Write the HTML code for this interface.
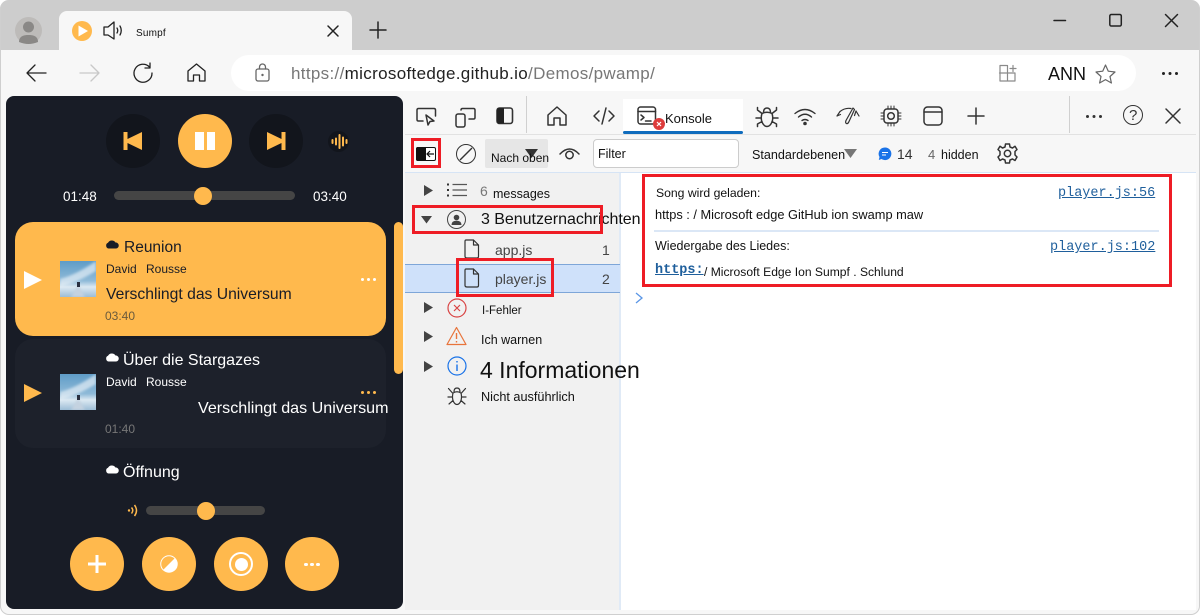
<!DOCTYPE html>
<html><head><meta charset="utf-8"><style>
html,body{margin:0;padding:0;width:1200px;height:615px;overflow:hidden;background:#fff}
body{position:relative;font-family:"Liberation Sans",sans-serif;color:#111}
.a{position:absolute}
.t{position:absolute;white-space:nowrap;line-height:1}
.m{font-family:"Liberation Mono",monospace;color:#1f5f9c;text-decoration:underline}
svg{position:absolute;overflow:visible}
.s{fill:none;stroke:#333;stroke-width:1.5;stroke-linecap:round;stroke-linejoin:round}
.c{position:absolute;border-radius:50%}
.red{position:absolute;border:3px solid #ee1c25;box-sizing:border-box}
</style></head><body>
<!-- chrome -->
<div class="a" style="left:0;top:0;width:1200px;height:615px;background:#f7f7f7;border-radius:9px"></div>
<div class="a" style="left:0;top:0;width:1200px;height:50px;background:#cdcdcd;border-radius:9px 9px 0 0"></div>
<div class="a" style="left:59px;top:11px;width:293px;height:39px;background:#f7f7f7;border-radius:8px 8px 0 0"></div>
<!-- profile -->
<div class="c" style="left:15px;top:17px;width:27px;height:27px;background:#bdbbb9"></div>
<svg style="left:15px;top:17px" width="27" height="27"><circle cx="13.500" cy="10" r="5.500" fill="#8a8886"/><path d="M4 25 C4 19 9 18 13.500 18 S23 19 23 25 Q18 27 13.500 27 T4 25Z" fill="#8a8886"/></svg>
<!-- tab -->
<div class="c" style="left:72px;top:21px;width:20px;height:20px;background:#ffb94d"></div>
<svg style="left:72px;top:21px" width="20" height="20"><path d="M6.500 4.500 L16 10 L6.500 15.500Z" fill="#fff"/></svg>
<svg style="left:103px;top:20px" width="22" height="22"><path class="s" style="stroke:#222;stroke-width:1.300" d="M1 7H5L11 2V19L5 15H1Z"/><path class="s" style="stroke:#222;stroke-width:1.300" d="M14 8Q15.500 10.500 14 13M17 6Q19.500 10.500 17 15"/></svg>
<div class="t" style="left:136px;top:29px;font-size:10px;letter-spacing:.2px">Sumpf</div>
<svg style="left:327px;top:25px" width="12" height="12"><path class="s" style="stroke:#222" d="M1 1L11 11M11 1L1 11"/></svg>
<svg style="left:369px;top:21px" width="18" height="18"><path class="s" style="stroke:#222" d="M9 1V17M1 9H17"/></svg>
<!-- window controls -->
<svg style="left:1053px;top:14px" width="14" height="14"><path class="s" style="stroke:#222" d="M1 6.500H12.500"/></svg>
<svg style="left:1109px;top:14px" width="14" height="14"><rect x=".8" y=".5" width="11.500" height="11.500" rx="1.500" class="s" style="stroke:#222"/></svg>
<svg style="left:1165px;top:14px" width="14" height="14"><path class="s" style="stroke:#222" d="M.5 .5L12.500 12.500M12.500 .5L.5 12.500"/></svg>
<!-- nav -->
<svg style="left:25px;top:63px" width="22" height="20"><path class="s" style="stroke:#222;stroke-width:1.300" d="M2 10H21M10 2L2 10L10 18"/></svg>
<svg style="left:79px;top:63px" width="22" height="20"><path class="s" style="stroke:#c8c8c8;stroke-width:1.300" d="M1 10H20M12 2L20 10L12 18"/></svg>
<svg style="left:132px;top:62px" width="22" height="22"><path class="s" style="stroke:#222;stroke-width:1.300" d="M17.500 5A9 9 0 1 0 20 11M18 1V6H13"/></svg>
<svg style="left:187px;top:63px" width="20" height="20"><path class="s" style="stroke:#222;stroke-width:1.300" d="M1 8L9.500 1L18 8V18H12.500V12H6.500V18H1Z"/></svg>
<div class="a" style="left:231px;top:55px;width:905px;height:36px;background:#fff;border-radius:18px"></div>
<svg style="left:255px;top:63px" width="16" height="19"><rect x="1" y="6" width="13" height="12" rx="2" class="s" style="stroke:#666;stroke-width:1.300"/><path class="s" style="stroke:#666;stroke-width:1.300" d="M4.500 6V4A3 3 0 0 1 10.500 4V6"/><circle cx="7.500" cy="12" r="1.200" fill="#666"/></svg>
<div class="t" style="left:291px;top:65px;font-size:17px;color:#777;letter-spacing:.33px">https://<span style="color:#222">microsoftedge.github.io</span>/Demos/pwamp/</div>
<svg style="left:998px;top:64px" width="20" height="18"><path class="s" style="stroke:#8a8a8a;stroke-width:1.200" d="M8.500 1.500H2V17H17V9H1.500M9.500 1.500V17M12 4.500H18M15 1.500V7.500"/></svg>
<div class="t" style="left:1048px;top:65px;font-size:18px">ANN</div>
<svg style="left:1095px;top:64px" width="21" height="20"><path class="s" style="stroke:#666;stroke-width:1.200" d="M10.500 1L13.300 7.200L20 8L15 12.500L16.400 19L10.500 15.600L4.600 19L6 12.500L1 8L7.700 7.200Z"/></svg>
<div class="a" style="left:1162px;top:72px;width:3px;height:3px;border-radius:50%;background:#222;box-shadow:6.500px 0 #222,13px 0 #222"></div>
<!-- devtools area -->
<div class="a" style="left:405px;top:96px;width:791px;height:514px;background:#fff"></div>
<div class="a" style="left:405px;top:96px;width:791px;height:38px;background:#f7f7f7;border-bottom:1px solid #e2e2e2"></div>
<div class="a" style="left:405px;top:135px;width:791px;height:37px;background:#f7f7f7;border-bottom:1px solid #d6e4f5"></div>
<div class="a" style="left:405px;top:173px;width:214px;height:437px;background:#f1f1f1;border-right:2px solid #e0eaf6"></div>
<div class="a" style="left:526px;top:96px;width:1px;height:37px;background:#d0d0d0"></div>
<div class="a" style="left:1069px;top:96px;width:1px;height:37px;background:#d0d0d0"></div>
<!-- devtools tabs -->
<svg style="left:416px;top:107px" width="22" height="20"><path class="s" d="M7 14H2.500Q1 14 1 12.500V3Q1 1.500 2.500 1.500H18Q19.500 1.500 19.500 3V9"/><path class="s" d="M10 8L12 18L14 14.500L18 14Z"/></svg>
<svg style="left:455px;top:107px" width="22" height="21"><rect x="1" y="7" width="9" height="13" rx="2" class="s"/><path class="s" d="M6 3V3Q6 1.500 7.500 1.500H18.500Q20 1.500 20 3V10.500Q20 12 18.500 12H14"/></svg>
<svg style="left:496px;top:107px" width="18" height="18"><rect x="1" y="1" width="15.500" height="15.500" rx="2.500" class="s" style="stroke-width:1.600"/><path d="M3.500 1H8V16.500H3.500Q1 16.500 1 14V3.500Q1 1 3.500 1Z" fill="#222"/></svg>
<svg style="left:546px;top:105px" width="22" height="22"><path class="s" d="M2 10L11 2L20 10V20H14V13H8V20H2Z"/></svg>
<svg style="left:593px;top:107px" width="22" height="18"><path class="s" d="M6 4L1 9L6 14M16 4L21 9L16 14M13 1L9 17"/></svg>
<div class="a" style="left:623px;top:99px;width:120px;height:35px;background:#fff"></div>
<div class="a" style="left:623px;top:131px;width:120px;height:3px;background:#0f6cbd;border-radius:2px"></div>
<svg style="left:637px;top:106px" width="20" height="20"><rect x="1" y="1" width="17.500" height="17" rx="2.500" class="s"/><path class="s" d="M1 5.500H18.500M4 9L7 11.500L4 14M8.500 15H14"/></svg>
<div class="c" style="left:653px;top:118px;width:12px;height:12px;background:#dd3c3c"></div>
<svg style="left:653px;top:118px" width="12" height="12"><path d="M4 4L8 8M8 4L4 8" stroke="#fff" stroke-width="1.200"/></svg>
<div class="t" style="left:665px;top:112px;font-size:13px">Konsole</div>
<svg style="left:755px;top:105px" width="24" height="23"><path class="s" d="M7 8.500Q12 6 17 8.500Q18.500 13 17 17Q15 21.500 12 21.500Q9 21.500 7 17Q5.500 13 7 8.500ZM8.500 7.500Q8.500 3 12 3Q15.500 3 15.500 7.500M2.500 2.500V5L7 8.500M21.500 2.500V5L17 8.500M1 13H6M23 13H18M2.500 21.500V19L7 16.500M21.500 21.500V19L17 16.500"/></svg>
<svg style="left:794px;top:107px" width="22" height="20"><path class="s" style="stroke-width:1.400" d="M1 6.500Q11 -1.500 21 6.500M4.500 10Q11 4.500 17.500 10M8 13.500Q11 11.500 14 13.500"/><circle cx="11" cy="16.500" r="1.800" fill="#333"/></svg>
<svg style="left:836px;top:106px" width="24" height="20"><path class="s" style="stroke-width:1.200" d="M1 10L4 5.500Q9 1.500 15 2.500M1 10L4.500 8.500M20 5L23 10M20 5L18.500 9.500M17 2L10 14.500Q9 17 10.500 17.500Q12 18 13 15.500L18.500 3.500Z"/></svg>
<svg style="left:880px;top:105px" width="22" height="22"><rect x="4" y="4" width="14" height="14" rx="3" class="s"/><circle cx="11" cy="11" r="3.300" class="s"/><path class="s" style="stroke-width:1" d="M8 1V3.500M11 1V3.500M14 1V3.500M8 18.500V21M11 18.500V21M14 18.500V21M1 8H3.500M1 11H3.500M1 14H3.500M18.500 8H21M18.500 11H21M18.500 14H21"/></svg>
<svg style="left:923px;top:106px" width="20" height="20"><rect x="1" y="1" width="18" height="18" rx="3.500" class="s"/><path class="s" d="M1 6H19"/></svg>
<svg style="left:967px;top:107px" width="18" height="18"><path class="s" d="M9 1V17M1 9H17"/></svg>
<div class="a" style="left:1086px;top:115px;width:3px;height:3px;border-radius:50%;background:#333;box-shadow:6.500px 0 #333,13px 0 #333"></div>
<div class="c" style="left:1123px;top:105px;width:20px;height:20px;border:1.300px solid #333;box-sizing:border-box"></div>
<div class="t" style="left:1129px;top:108px;font-size:15px;color:#333">?</div>
<svg style="left:1165px;top:108px" width="16" height="16"><path class="s" d="M1 1L15 15M15 1L1 15"/></svg>
<!-- console toolbar -->
<div class="a" style="left:416px;top:147px;width:20px;height:14px;border-radius:2px;border:1.500px solid #111;box-sizing:border-box;background:#fff"></div>
<div class="a" style="left:416px;top:147px;width:10px;height:14px;background:#111;border-radius:2px 0 0 2px"></div>
<svg style="left:425px;top:149px" width="10" height="10"><path d="M9 5H2M5 2L2 5L5 8" fill="none" stroke="#111" stroke-width="1.200"/></svg>
<div class="c" style="left:456px;top:144px;width:20px;height:20px;border:1.400px solid #333;box-sizing:border-box"></div>
<svg style="left:456px;top:144px" width="20" height="20"><path d="M4 16L16 4" stroke="#333" stroke-width="1.400"/></svg>
<div class="a" style="left:485px;top:139px;width:63px;height:29px;background:#e6e6e6;border-radius:2px"></div>
<svg style="left:525px;top:149px" width="14" height="10"><path d="M0 0H13L6.500 9Z" fill="#333"/></svg>
<div class="t" style="left:491px;top:152px;font-size:12px">Nach oben</div>
<svg style="left:559px;top:147px" width="21" height="14"><path class="s" d="M1 7Q10.500 -3 20 7"/><circle cx="10.500" cy="8" r="3.700" class="s"/></svg>
<div class="a" style="left:593px;top:139px;width:146px;height:29px;background:#fff;border:1px solid #ccc;border-radius:4px;box-sizing:border-box"></div>
<div class="t" style="left:598px;top:148px;font-size:12.500px">Filter</div>
<div class="t" style="left:752px;top:149px;font-size:12.600px">Standardebenen</div>
<svg style="left:844px;top:149px" width="13" height="9"><path d="M0 0H13L6.500 9Z" fill="#777"/></svg>
<svg style="left:878px;top:147px" width="14" height="14"><path d="M7 .5A6.300 6.300 0 1 1 3.500 12L.8 13L1.500 10A6.300 6.300 0 0 1 7 .5Z" fill="#1a73e8"/><path d="M4 5.500H10M4 8H8" stroke="#fff" stroke-width="1"/></svg>
<div class="t" style="left:897px;top:147px;font-size:14px;color:#333">14</div>
<div class="t" style="left:928px;top:148px;font-size:13px;color:#666">4</div>
<div class="t" style="left:941px;top:149px;font-size:12.500px">hidden</div>
<svg style="left:997px;top:143px" width="21" height="21"><path class="s" d="M8.500 1H12.500L13 4L15.500 5L18 3.300L20 6.500L18 8.500V12L20 14L18 17.500L15.500 16L13 17L12.500 20H8.500L8 17L5.500 16L3 17.500L1 14L3 12V8.500L1 6.500L3 3.300L5.500 5L8 4Z"/><circle cx="10.500" cy="10.500" r="3.200" class="s"/></svg>
<!-- sidebar -->
<svg style="left:424px;top:185px" width="9" height="11"><path d="M0 0L9 5.500L0 11Z" fill="#444"/></svg>
<svg style="left:446px;top:183px" width="22" height="14"><path d="M6.500 1.500H21M6.500 7H21M6.500 12.500H21" stroke="#555" stroke-width="1.300"/><path d="M1 1.500H3M1 7H3M1 12.500H3" stroke="#333" stroke-width="2"/></svg>
<div class="t" style="left:480px;top:184px;font-size:14px;color:#777">6</div>
<div class="t" style="left:493px;top:188px;font-size:12.500px">messages</div>
<svg style="left:421px;top:216px" width="12" height="8"><path d="M0 0H11L5.500 7.500Z" fill="#444"/></svg>
<div class="c" style="left:447px;top:210px;width:19px;height:19px;border:1.300px solid #444;box-sizing:border-box"></div>
<svg style="left:447px;top:210px" width="19" height="19"><circle cx="9.500" cy="7.500" r="2.800" fill="#444"/><path d="M4.500 15Q4.500 10.800 9.500 10.800Q14.500 10.800 14.500 15Z" fill="#444"/></svg>
<div class="t" style="left:481px;top:212px;font-size:16px;letter-spacing:-.03px">3 Benutzernachrichten</div>
<svg style="left:464px;top:239px" width="16" height="20"><path class="s" style="stroke-width:1.200" d="M2 1H9.500L14.500 6V17.500Q14.500 19 13 19H3Q1 19 1 17.500V2.500Q1 1 2 1ZM9.500 1V6H14.500"/></svg>
<div class="t" style="left:495px;top:243px;font-size:14px;color:#444">app.js</div>
<div class="t" style="left:602px;top:243px;font-size:14px;color:#444">1</div>
<div class="a" style="left:405px;top:264px;width:215px;height:29px;background:#cfe1fa;border-top:1px solid #7ea6d8;border-bottom:1px solid #7ea6d8;box-sizing:border-box"></div>
<svg style="left:464px;top:268px" width="16" height="20"><path class="s" style="stroke-width:1.200" d="M2 1H9.500L14.500 6V17.500Q14.500 19 13 19H3Q1 19 1 17.500V2.500Q1 1 2 1ZM9.500 1V6H14.500"/></svg>
<div class="t" style="left:495px;top:272px;font-size:14px;color:#444">player.js</div>
<div class="t" style="left:602px;top:272px;font-size:14px;color:#444">2</div>
<svg style="left:424px;top:302px" width="9" height="11"><path d="M0 0L9 5.500L0 11Z" fill="#444"/></svg>
<svg style="left:447px;top:298px" width="20" height="20"><circle cx="10" cy="10" r="9" fill="none" stroke="#d94545" stroke-width="1.200"/><path d="M7 7L13 13M13 7L7 13" stroke="#d94545" stroke-width="1.200"/></svg>
<div class="t" style="left:482px;top:306px;font-size:11.500px">I-Fehler</div>
<svg style="left:424px;top:331px" width="9" height="11"><path d="M0 0L9 5.500L0 11Z" fill="#444"/></svg>
<svg style="left:446px;top:326px" width="21" height="20"><path d="M10.500 1.500L20 18.500H1Z" fill="none" stroke="#e8743b" stroke-width="1.200" stroke-linejoin="round"/><path d="M10.500 7V13M10.500 15V16.500" stroke="#e8743b" stroke-width="1.400"/></svg>
<div class="t" style="left:481px;top:334px;font-size:12.500px">Ich warnen</div>
<svg style="left:424px;top:361px" width="9" height="11"><path d="M0 0L9 5.500L0 11Z" fill="#444"/></svg>
<svg style="left:447px;top:356px" width="20" height="20"><circle cx="10" cy="10" r="9" fill="none" stroke="#1a73e8" stroke-width="1.200"/><path d="M10 8.500V15M10 5V6.500" stroke="#1a73e8" stroke-width="1.400"/></svg>
<div class="t" style="left:480px;top:359px;font-size:23px">4 Informationen</div>
<svg style="left:447px;top:386px" width="20" height="20"><path class="s" style="stroke-width:1.200" d="M6 7Q10 4.500 14 7Q15 11 14 14.500Q12.500 18.500 10 18.500Q7.500 18.500 6 14.500Q5 11 6 7ZM7 6Q7 2 10 2Q13 2 13 6M1.500 2.500L5.500 7M18.500 2.500L14.500 7M1 11H5M19 11H15M2 18L6 14.500M18 18L14 14.500"/></svg>
<div class="t" style="left:481px;top:391px;font-size:12.700px">Nicht ausführlich</div>
<!-- console -->
<div class="t" style="left:656px;top:187px;font-size:12.200px">Song wird geladen:</div>
<div class="t m" style="left:1058px;top:187px;font-size:13.500px">player.js:56</div>
<div class="t" style="left:655px;top:209px;font-size:12.800px">https : / Microsoft edge GitHub ion swamp maw</div>
<div class="a" style="left:654px;top:230px;width:505px;height:2px;background:#dbe7f6"></div>
<div class="t" style="left:655px;top:240px;font-size:12.500px">Wiedergabe des Liedes:</div>
<div class="t m" style="left:1050px;top:241px;font-size:13.500px">player.js:102</div>
<div class="t m" style="left:655px;top:264px;font-size:13.500px;font-weight:bold">https:</div>
<div class="t" style="left:704px;top:266px;font-size:12.100px">/ Microsoft Edge Ion Sumpf . Schlund</div>
<svg style="left:635px;top:292px" width="9" height="12"><path d="M1 1L7 6L1 11" fill="none" stroke="#5a96e6" stroke-width="1.300"/></svg>
<!-- red boxes -->
<div class="red" style="left:411px;top:138px;width:30px;height:30px"></div>
<div class="red" style="left:412px;top:205px;width:191px;height:29px"></div>
<div class="red" style="left:456px;top:258px;width:98px;height:39px"></div>
<div class="red" style="left:642px;top:174px;width:530px;height:113px"></div>
<!-- player -->
<div class="a" style="left:6px;top:96px;width:397px;height:513px;background:#181c26;border-radius:8px"></div>
<div class="c" style="left:106px;top:114px;width:54px;height:54px;background:#12151c"></div>
<svg style="left:123px;top:132px" width="20" height="18"><path d="M0.500 0H4.500V7L19 0V18L4.500 11V18H0.500Z" fill="#ffb94d"/></svg>
<div class="c" style="left:178px;top:114px;width:54px;height:54px;background:#ffb94d"></div>
<div class="a" style="left:195px;top:132px;width:8.500px;height:18px;background:#fff"></div>
<div class="a" style="left:206.500px;top:132px;width:8px;height:18px;background:#fff"></div>
<div class="c" style="left:249px;top:114px;width:54px;height:54px;background:#12151c"></div>
<svg style="left:267px;top:132px" width="19" height="18"><path d="M0 0L14.500 7V0H18.500V18H14.500V11L0 18Z" fill="#ffb94d"/></svg>
<div class="c" style="left:328px;top:131px;width:21px;height:21px;background:#12151c"></div>
<svg style="left:331px;top:134px" width="16" height="15"><path d="M1.500 6V9M5 4.500V10.500M8.500 1V14M12 3.500V11.500M15.500 6V9" stroke="#ffb94d" stroke-width="2" stroke-linecap="round"/></svg>
<div class="t" style="left:63px;top:190px;font-size:13.500px;color:#fff">01:48</div>
<div class="a" style="left:114px;top:191px;width:181px;height:9px;background:#454545;border-radius:5px"></div>
<div class="c" style="left:194px;top:187px;width:18px;height:18px;background:#ffb94d"></div>
<div class="t" style="left:313px;top:190px;font-size:13.500px;color:#fff">03:40</div>
<!-- scrollbar -->
<div class="a" style="left:394px;top:222px;width:9px;height:152px;background:#ffb94d;border-radius:5px"></div>
<!-- card 1 -->
<div class="a" style="left:15px;top:222px;width:371px;height:114px;background:#ffb94d;border-radius:18px"></div>
<svg style="left:24px;top:271px" width="18" height="18"><path d="M0 0L18 9L0 18Z" fill="#fff"/></svg>
<svg style="left:60px;top:261px" width="36" height="36"><defs><linearGradient id="g" x1="0" y1="0" x2="0" y2="1"><stop offset="0" stop-color="#5f9cc7"/><stop offset=".55" stop-color="#8fbad8"/><stop offset=".72" stop-color="#dce9f2"/><stop offset="1" stop-color="#9dbdd6"/></linearGradient><filter id="b" x="-20%" y="-20%" width="140%" height="140%"><feGaussianBlur stdDeviation="1.200"/></filter><clipPath id="cp"><rect width="36" height="36"/></clipPath></defs><rect width="36" height="36" fill="url(#g)"/><g clip-path="url(#cp)"><path d="M0 18Q16 14 36 0V10Q16 22 0 26Z" fill="#e4eef6" opacity=".7" filter="url(#b)"/><path d="M18 24L11 36H25Z" fill="#c4d2e0" filter="url(#b)"/><rect x="17" y="21" width="3" height="5" fill="#2a3040"/></g></svg>
<svg style="left:105px;top:239px" width="14" height="10"><path d="M3.500 9.500A3 3 0 0 1 3 3.800A4.300 4.300 0 0 1 10.500 3.500A3 3 0 0 1 11 9.500Z" fill="#181c26"/></svg>
<div class="t" style="left:124px;top:240px;font-size:15.500px;color:#181c26">Reunion</div>
<div class="t" style="left:106px;top:263px;font-size:12px;color:#181c26;word-spacing:6px">David Rousse</div>
<div class="t" style="left:106px;top:287px;font-size:15.700px;color:#181c26">Verschlingt das Universum</div>
<div class="t" style="left:105px;top:310px;font-size:12px;color:#6a5a3c">03:40</div>
<div class="a" style="left:361px;top:278px;width:3.200px;height:3.200px;border-radius:50%;background:#fff;box-shadow:6px 0 #fff,12px 0 #fff"></div>
<!-- card 2 -->
<div class="a" style="left:15px;top:339px;width:371px;height:109px;background:#1d212b;border-radius:18px"></div>
<svg style="left:24px;top:384px" width="18" height="18"><path d="M0 0L18 9L0 18Z" fill="#ffb94d"/></svg>
<svg style="left:60px;top:374px" width="36" height="36"><rect width="36" height="36" fill="url(#g)"/><g clip-path="url(#cp)"><path d="M0 18Q16 14 36 0V10Q16 22 0 26Z" fill="#e4eef6" opacity=".7" filter="url(#b)"/><path d="M18 24L11 36H25Z" fill="#c4d2e0" filter="url(#b)"/><rect x="17" y="21" width="3" height="5" fill="#2a3040"/></g></svg>
<svg style="left:105px;top:352px" width="14" height="10"><path d="M3.500 9.500A3 3 0 0 1 3 3.800A4.300 4.300 0 0 1 10.500 3.500A3 3 0 0 1 11 9.500Z" fill="#fff"/></svg>
<div class="t" style="left:123px;top:353px;font-size:16px;color:#fff">Über die Stargazes</div>
<div class="t" style="left:106px;top:376px;font-size:12px;color:#fff;word-spacing:6px">David Rousse</div>
<div class="t" style="left:198px;top:400px;font-size:16.100px;color:#fff">Verschlingt das Universum</div>
<div class="t" style="left:105px;top:423px;font-size:12px;color:#777">01:40</div>
<div class="a" style="left:361px;top:391px;width:3.200px;height:3.200px;border-radius:50%;background:#ffb94d;box-shadow:6px 0 #ffb94d,12px 0 #ffb94d"></div>
<!-- third -->
<svg style="left:105px;top:464px" width="14" height="10"><path d="M3.500 9.500A3 3 0 0 1 3 3.800A4.300 4.300 0 0 1 10.500 3.500A3 3 0 0 1 11 9.500Z" fill="#fff"/></svg>
<div class="t" style="left:123px;top:465px;font-size:16px;color:#fff">Öffnung</div>
<!-- volume -->
<svg style="left:127px;top:504px" width="11" height="13"><circle cx="2" cy="6.500" r="1.200" fill="#ffb94d"/><path d="M4.500 3.500Q7 6.500 4.500 9.500M7.500 1Q11.500 6.500 7.500 12" fill="none" stroke="#ffb94d" stroke-width="1.500"/></svg>
<div class="a" style="left:146px;top:506px;width:119px;height:9px;background:#454545;border-radius:5px"></div>
<div class="c" style="left:197px;top:502px;width:18px;height:18px;background:#ffb94d"></div>
<!-- bottom buttons -->
<div class="c" style="left:70px;top:537px;width:54px;height:54px;background:#ffb94d"></div>
<svg style="left:88px;top:555px" width="18" height="18"><path d="M9 0V18M0 9H18" stroke="#fff" stroke-width="3"/></svg>
<div class="c" style="left:142px;top:537px;width:54px;height:54px;background:#ffb94d"></div>
<svg style="left:160px;top:555px" width="18" height="18"><circle cx="9" cy="9" r="8" fill="#fff" stroke="#fff" stroke-width="1.500"/><path d="M3.500 14.500L14.500 3.500A7.700 7.700 0 0 0 3.500 14.500Z" fill="#ffb94d"/></svg>
<div class="c" style="left:214px;top:537px;width:54px;height:54px;background:#ffb94d"></div>
<div class="c" style="left:229px;top:552px;width:24px;height:24px;border:2.500px solid #fff;box-sizing:border-box"></div>
<div class="c" style="left:234.500px;top:557.500px;width:13px;height:13px;background:#fff"></div>
<div class="c" style="left:285px;top:537px;width:54px;height:54px;background:#ffb94d"></div>
<div class="a" style="left:304px;top:562.500px;width:3.500px;height:3.500px;border-radius:50%;background:#fff;box-shadow:6px 0 #fff,12px 0 #fff"></div>
<!-- window outline -->
<div class="a" style="left:0;top:0;width:1200px;height:615px;border:1.500px solid #cfcfcf;border-top:none;border-radius:9px;box-sizing:border-box"></div>
</body></html>
